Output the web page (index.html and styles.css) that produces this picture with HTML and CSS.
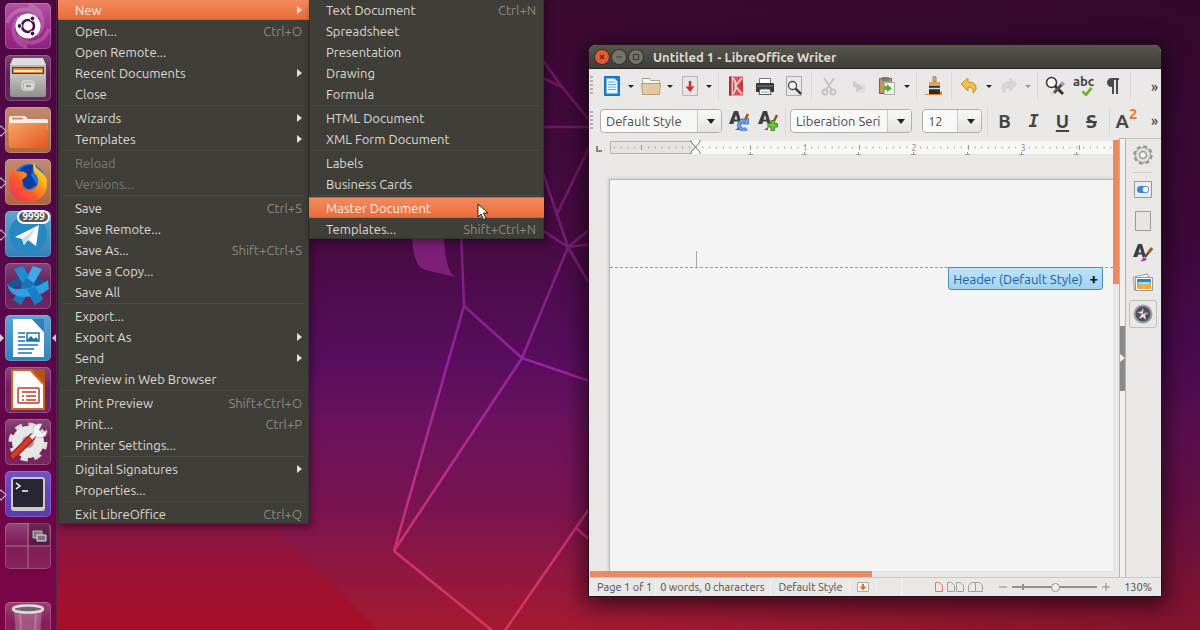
FILE: index.html
```html
<!DOCTYPE html>
<html lang="en">
<head>
    <meta charset="UTF-8">
    <meta name="viewport" content="width=device-width, initial-scale=1.0">
    <title>Untitled 1 - LibreOffice Writer</title>
    <link rel="stylesheet" href="styles.css">
</head>
<body>
    <svg class="wallpaper" viewBox="0 0 1200 630" preserveAspectRatio="xMidYMid slice" aria-hidden="true">
        <defs>
            <linearGradient id="sky" x1="0" y1="0" x2="0" y2="1">
                <stop offset="0" stop-color="#3a0932"/>
                <stop offset=".38" stop-color="#470b42"/>
                <stop offset=".57" stop-color="#580d5e"/>
                <stop offset=".66" stop-color="#69125d"/>
                <stop offset=".8" stop-color="#781451"/>
                <stop offset="1" stop-color="#a51a30"/>
            </linearGradient>
            <linearGradient id="wire" gradientUnits="userSpaceOnUse" x1="0" y1="60" x2="0" y2="630">
                <stop offset="0" stop-color="#6c1760"/>
                <stop offset=".3" stop-color="#751c70"/>
                <stop offset=".53" stop-color="#9622a0"/>
                <stop offset=".75" stop-color="#c02d88"/>
                <stop offset="1" stop-color="#dc355a"/>
            </linearGradient>
            <linearGradient id="red" x1="0" y1="0" x2="0" y2="1">
                <stop offset="0" stop-color="#a80a2a" stop-opacity="0"/>
                <stop offset="1" stop-color="#a80a25" stop-opacity=".75"/>
            </linearGradient>
            <linearGradient id="shade" x1="0" y1="0" x2="1" y2="0">
                <stop offset=".5" stop-color="#200020" stop-opacity="0"/>
                <stop offset="1" stop-color="#200020" stop-opacity=".25"/>
            </linearGradient>
        </defs>
        <path d="M0 0h1200v630H0z" fill="url(#sky)"/>
        <path d="M0 500h250l128 130H0z" fill="url(#red)"/>
        <path d="M0 0h1200v630H0z" fill="url(#shade)"/>
        <path d="M412 238Q414 268 425 270L455 277Q445 270 444 238z" fill="#7d1e78"/>
        <path d="M461 230L464 306L522 358L568 247M464 306L394 551L522 358L610 388M394 551L494 632M504 632L620 464M576 528L600 549M568 247L530 222M568 247L600 221M568 247L600 243M568 247L600 302M568 247L543 173M557 214L600 125M530 42L562 87L600 133M530 72L562 87M530 127H600" fill="none" stroke="url(#wire)" stroke-width="2.6"/>
    </svg>

    <nav class="launcher" aria-label="Launcher">
        <button class="tile dash" aria-label="Search your computer">
            <svg viewBox="0 0 46 46">
                <path d="M2 20C8 4 26 2 34 14M44 26C38 42 20 44 12 32M22 44C8 40 4 24 14 14M24 2C38 6 42 22 32 32" fill="none" stroke="#fff" stroke-opacity=".18" stroke-width="4"/>
                <circle cx="23" cy="23" r="12.5" fill="#fff"/>
                <circle cx="23" cy="23" r="6" fill="none" stroke="#50104a" stroke-width="2.6"/>
                <g fill="#50104a" stroke="#fff" stroke-width="1"><circle cx="14.5" cy="23" r="2.4"/><circle cx="27.5" cy="15.5" r="2.4"/><circle cx="27.5" cy="30.5" r="2.4"/></g>
            </svg>
        </button>
        <button class="tile" aria-label="Files">
            <svg viewBox="0 0 46 46">
                <linearGradient id="steel" x1="0" y1="0" x2="0" y2="1"><stop stop-color="#c4c4c2"/><stop offset="1" stop-color="#8f8f8d"/></linearGradient>
                <path d="M8 3h30l3 7v8H5v-8z" fill="#dededc"/>
                <path d="M5 10h36v9H5z" fill="#b9b9b7"/>
                <path d="M7 12h32v7H7z" fill="#4b3a2e"/>
                <path d="M8 13h30v5H8z" fill="#e8822f"/><path d="M9 15h28v2H9z" fill="#fbe6d0"/>
                <path d="M5 19h36v21a2 2 0 0 1-2 2H7a2 2 0 0 1-2-2z" fill="url(#steel)"/>
                <rect x="17" y="26" width="12" height="9" rx="2" fill="#b5b5b3" stroke="#e6e6e4"/>
                <rect x="20" y="29" width="7" height="4" fill="#9a9a98" stroke="#fff"/>
            </svg>
        </button>
        <button class="tile brown running" aria-label="Home folder">
            <svg viewBox="0 0 46 46">
                <linearGradient id="fold" x1="0" y1="0" x2="1" y2="1"><stop stop-color="#f5a768"/><stop offset="1" stop-color="#e4561d"/></linearGradient>
                <path d="M4 11q0-2 2-2h14l3 3h18q2 0 2 2v8H4z" fill="#f2efec"/>
                <path d="M7 11.500h11" stroke="#e98a4b" stroke-width="2"/>
                <path d="M3 16h40l-1 23q0 2-2 2H6q-2 0-2-2z" fill="url(#fold)"/>
            </svg>
        </button>
        <button class="tile brown running" aria-label="Firefox">
            <svg viewBox="0 0 46 46">
                <linearGradient id="fox" x1="0" y1="1" x2="1" y2="0"><stop stop-color="#f0266a"/><stop offset=".4" stop-color="#ff5b28"/><stop offset=".75" stop-color="#ffc21f"/><stop offset="1" stop-color="#fff044"/></linearGradient>
                <circle cx="24" cy="21" r="16" fill="#1a78e0"/>
                <path d="M14 12q7-9 17-5l-5 9 6 10-9 5-8-9z" fill="#123d9e"/>
                <path d="M29 3Q30 9 35 12Q43 18 42 26Q40 42 23 43Q5 42 4 25Q4 15 10 8L12 13Q16 11 21 14Q23 15 21 18L17 21Q19 25 17 27Q21 32 28 30Q36 26 32 17Q26 12 29 3z" fill="url(#fox)"/>
            </svg>
        </button>
        <button class="tile blue running" aria-label="Telegram, 9999 unread">
            <svg viewBox="0 0 46 46">
                <circle cx="23" cy="23" r="19" fill="#2688c4"/>
                <path d="M10 26L34 14L31 35L23 29L19 34L17 28z" fill="#fff"/>
                <path d="M17 28L31 17L23 29L19 34z" fill="#c6deed"/>
            </svg>
            <span class="badge">9999</span>
        </button>
        <button class="tile" aria-label="Ribbon">
            <svg viewBox="0 0 46 46">
                <path d="M3 20Q23 8 43 20L42 27Q23 16 4 27z" fill="#125b96"/>
                <path d="M9 6L18 3L38 36L30 42z" fill="#1f8bd3"/>
                <path d="M28 3L37 6L16 42L8 37z" fill="#1976bb"/>
                <path d="M28 3L37 6L29 20L22 15z" fill="#41a9e8"/>
                <path d="M2 19Q3 27 17 26Q33 25 43 17L44 26Q34 34 19 34Q3 33 2 19z" fill="#2f9fe4"/>
                <path d="M22 26L30 24L38 36L30 42z" fill="#1b7fc6"/>
            </svg>
        </button>
        <button class="tile blue running active" aria-label="LibreOffice Writer">
            <svg viewBox="0 0 46 46">
                <path d="M8 4h19l12 13v25H8z" fill="#fff"/><path d="M27 4h12v13z" fill="#2c82c0"/>
                <path d="M13 18h7M13 22h7M13 26h7M13 30h20M13 34h16M13 38h14" stroke="#1775b7" stroke-width="1.500"/>
                <path d="M22 18h12v8H22z" fill="none" stroke="#1775b7" stroke-width="1.500"/><path d="M21 26l5-5 3 3 2-2 3 4z" fill="#1775b7"/>
            </svg>
        </button>
        <button class="tile" aria-label="LibreOffice Impress">
            <svg viewBox="0 0 46 46">
                <path d="M6 2h21l13 14v27H6z" fill="#cf661c"/><path d="M8 4h17l13 14v23H8z" fill="#fff"/><path d="M27 2h13v14z" fill="#b5521c"/>
                <rect x="13" y="21" width="21" height="15" rx="1" fill="none" stroke="#bd3c2a" stroke-width="1.500"/>
                <path d="M17 25h14M17 29h2M21 29h10M17 33h2M21 33h10" stroke="#bd3c2a" stroke-width="1.500"/>
            </svg>
        </button>
        <button class="tile" aria-label="System Settings">
            <svg viewBox="0 0 46 46">
                <circle cx="23" cy="23" r="17" fill="none" stroke="#dcdcda" stroke-width="5" stroke-dasharray="7 6.350"/>
                <circle cx="23" cy="23" r="11" fill="none" stroke="#e6e6e4" stroke-width="10"/>
                <circle cx="23" cy="23" r="6" fill="#a88a98" stroke="#c8c8c6"/>
                <path d="M8 37L27 18" stroke="#8a1512" stroke-width="7" stroke-linecap="round"/>
                <path d="M8 37L27 18" stroke="#d83a2a" stroke-width="5" stroke-linecap="round"/>
                <path d="M26 19L33 12" stroke="#f4f4f4" stroke-width="4"/>
                <path d="M37 5a7 7 0 1 0 5 6l-5 3-3-3z" fill="#f4f4f4" stroke="#aaa" stroke-width=".5"/>
            </svg>
        </button>
        <button class="tile violet running" aria-label="Terminal">
            <svg viewBox="0 0 46 46">
                <rect x="6" y="6" width="34" height="34" rx="3" fill="#cbcbc8"/>
                <rect x="8" y="8" width="30" height="28" rx="1" fill="#272632"/>
                <path d="M11 12l4 3-4 3M17 20h6" fill="none" stroke="#fff" stroke-width="1.500"/>
            </svg>
        </button>
        <button class="tile" aria-label="Workspace Switcher">
            <svg viewBox="0 0 46 46">
                <path d="M24 0h20v23H24z" fill="#2b1523" fill-opacity=".45"/>
                <path d="M23 1v44M1 23h44" stroke="#b06f97" stroke-width="1"/>
                <path d="M28 8h9v7h-9z" fill="#8b7a85" stroke="#bbb"/><path d="M32 12h9v6h-9z" fill="#777" stroke="#e6e6e6"/>
            </svg>
        </button>
        <button class="tile trash" aria-label="Trash">
            <svg viewBox="0 0 46 46">
                <path d="M9 8h28l-3 38H12z" fill="#d6b9c8" fill-opacity=".35"/>
                <path d="M15 12l2 33M31 12l-2 33" stroke="#fff" stroke-opacity=".2" stroke-width="2"/>
                <ellipse cx="23" cy="7" rx="15" ry="3.500" fill="#74606a" stroke="#dededb" stroke-width="2.500"/>
            </svg>
        </button>
    </nav>

    <div class="menu file-menu" role="menu" aria-label="File">
        <button class="item sub selected" role="menuitem">New</button>
        <button class="item" role="menuitem">Open...<kbd>Ctrl+O</kbd></button>
        <button class="item" role="menuitem">Open Remote...</button>
        <button class="item sub" role="menuitem">Recent Documents</button>
        <button class="item" role="menuitem">Close</button>
        <hr>
        <button class="item sub" role="menuitem">Wizards</button>
        <button class="item sub" role="menuitem">Templates</button>
        <hr>
        <button class="item" role="menuitem" disabled>Reload</button>
        <button class="item" role="menuitem" disabled>Versions...</button>
        <hr>
        <button class="item" role="menuitem">Save<kbd>Ctrl+S</kbd></button>
        <button class="item" role="menuitem">Save Remote...</button>
        <button class="item" role="menuitem">Save As...<kbd>Shift+Ctrl+S</kbd></button>
        <button class="item" role="menuitem">Save a Copy...</button>
        <button class="item" role="menuitem">Save All</button>
        <hr>
        <button class="item" role="menuitem">Export...</button>
        <button class="item sub" role="menuitem">Export As</button>
        <button class="item sub" role="menuitem">Send</button>
        <button class="item" role="menuitem">Preview in Web Browser</button>
        <hr>
        <button class="item" role="menuitem">Print Preview<kbd>Shift+Ctrl+O</kbd></button>
        <button class="item" role="menuitem">Print...<kbd>Ctrl+P</kbd></button>
        <button class="item" role="menuitem">Printer Settings...</button>
        <hr>
        <button class="item sub" role="menuitem">Digital Signatures</button>
        <button class="item" role="menuitem">Properties...</button>
        <hr>
        <button class="item" role="menuitem">Exit LibreOffice<kbd>Ctrl+Q</kbd></button>
    </div>

    <div class="menu new-menu" role="menu" aria-label="New">
        <button class="item" role="menuitem">Text Document<kbd>Ctrl+N</kbd></button>
        <button class="item" role="menuitem">Spreadsheet</button>
        <button class="item" role="menuitem">Presentation</button>
        <button class="item" role="menuitem">Drawing</button>
        <button class="item" role="menuitem">Formula</button>
        <hr>
        <button class="item" role="menuitem">HTML Document</button>
        <button class="item" role="menuitem">XML Form Document</button>
        <hr>
        <button class="item" role="menuitem">Labels</button>
        <button class="item" role="menuitem">Business Cards</button>
        <hr>
        <button class="item selected" role="menuitem">Master Document</button>
        <button class="item" role="menuitem">Templates...<kbd>Shift+Ctrl+N</kbd></button>
    </div>
    <svg class="pointer" viewBox="0 0 12 18" aria-hidden="true"><path d="M1 1v13l3-3 2.500 5.500 2.500-1-2.500-5.500H11z" fill="#fff" stroke="#222"/></svg>

    <main class="window">
        <header class="titlebar">
            <button class="dot close" aria-label="Close"><svg viewBox="0 0 14 14"><path d="M5 5l4 4M9 5l-4 4"/></svg></button>
            <button class="dot" aria-label="Minimize"><svg viewBox="0 0 14 14"><path d="M4 7h6"/></svg></button>
            <button class="dot" aria-label="Maximize"><svg viewBox="0 0 14 14"><path d="M4.500 4.500h5v5h-5z"/></svg></button>
            <h1>Untitled 1 - LibreOffice Writer</h1>
        </header>

        <div class="toolbar" role="toolbar" aria-label="Standard">
            <i class="grip"></i>
            <button class="tool split" aria-label="New"><svg viewBox="0 0 20 20"><path d="M2.500.500h15v19h-15z" fill="#1d80c4" stroke="#1a72b0"/><path d="M4.500 2.500h8l3 3v12h-11z" fill="#e9f4fc"/><path d="M6 6h7M6 8.500h8M6 11h8M6 13.500h8" stroke="#6aaede"/></svg></button>
            <button class="caret" aria-label="New options"></button>
            <button class="tool split" aria-label="Open"><svg viewBox="0 0 20 20"><path d="M1.500 2.500h7l1 2h9v6h-17z" fill="#f8f6f2" stroke="#a8a29a"/><path d="M.500 7.500h19l-1 11h-17z" fill="#e4c9a0" stroke="#b79c75"/></svg></button>
            <button class="caret" aria-label="Open options"></button>
            <button class="tool split" aria-label="Save"><svg viewBox="0 0 20 20"><path d="M2.500.500h15v19h-15z" fill="#e6e5e4" stroke="#b5b4b2"/><path d="M10 5v7" stroke="#d22c2c" stroke-width="2.500"/><path d="M5.500 10.500h9L10 16z" fill="#d22c2c"/></svg></button>
            <button class="caret" aria-label="Save options"></button>
            <i class="sep"></i>
            <button class="tool" aria-label="Export as PDF"><svg viewBox="0 0 20 20"><path d="M3 .500h14v19H3z" fill="#d4575a"/><path d="M6 1v18M16 2L9 10l7 8M7 2q3 4 3 8t-3 8" fill="none" stroke="#f6dcdc" stroke-width="1.500"/><path d="M3 .500h2.500v19H3z" fill="#b22c34"/><path d="M17 4v12l-5-6z" fill="#c13c42"/></svg></button>
            <button class="tool" aria-label="Print"><svg viewBox="0 0 20 20"><path d="M4.500 2.500h11v6h-11z" fill="#fff" stroke="#777"/><path d="M1 8q0-1 1-1h16q1 0 1 1v8H1z" fill="#35383b"/><path d="M2 10h16" stroke="#84888c"/><path d="M5 13h10l1 5.500H4z" fill="#fff" stroke="#555"/><path d="M6 16h8" stroke="#6ba4ce"/></svg></button>
            <button class="tool" aria-label="Print Preview"><svg viewBox="0 0 20 20"><path d="M2.500.500h15v19h-15z" fill="#e8e7e6" stroke="#aaa"/><circle cx="8.500" cy="9.500" r="4" fill="#f6f6f6" stroke="#444" stroke-width="1.300"/><path d="M11.500 12.500l5.500 5.500" stroke="#333" stroke-width="2.400"/></svg></button>
            <i class="sep"></i>
            <button class="tool" aria-label="Cut"><svg viewBox="0 0 20 20"><g fill="none" stroke="#c3c2bf" stroke-width="1.800"><path d="M5 2l8 12M15 2L7 14"/><circle cx="6" cy="16" r="2.500"/><circle cx="14" cy="16" r="2.500"/></g></svg></button>
            <button class="tool" aria-label="Copy"><svg viewBox="0 0 20 20"><path d="M9 8h8v9H9z" fill="#dfdedb"/><path d="M7 5q-4 5 2 6M9 8l5 4-5 3z" fill="#cfcecb" stroke="#c9c8c5" stroke-width="1.500"/></svg></button>
            <button class="tool" aria-label="Paste"><svg viewBox="0 0 20 20"><path d="M2.500 2.500h12v15h-12z" fill="#c09555" stroke="#876329"/><path d="M5 1h7v4H5z" fill="#777"/><path d="M7.500 6.500h10v12h-10z" fill="#f0f0ef" stroke="#aaa"/><path d="M7 10h3V8l5 4.500-5 3.500v-2H7z" fill="#57ae2c"/></svg></button>
            <button class="caret" aria-label="Paste options"></button>
            <i class="sep"></i>
            <button class="tool" aria-label="Clone Formatting"><svg viewBox="0 0 20 20"><path d="M1 18h13l4-3v4H1z" fill="#ee8127"/><path d="M9 6V1q1.500-1.500 3 0v5z" fill="#d9b377" stroke="#a77d3b"/><path d="M5 6h11v5H5z" fill="#d7a55d"/><path d="M5 10h11v8H5z" fill="#2d2b2a"/><path d="M5 12.500h11" stroke="#ddd" stroke-width="1.500"/></svg></button>
            <i class="sep"></i>
            <button class="tool" aria-label="Undo"><svg viewBox="0 0 20 20"><path d="M2 8l7-6v4q9 0 8 7-1 3-3 4 1-6-5-6v4z" fill="#f4c04a" stroke="#c78d20"/></svg></button>
            <button class="caret" aria-label="Undo options"></button>
            <button class="tool split" aria-label="Redo" disabled><svg viewBox="0 0 20 20"><path d="M18 8l-7-6v4q-9 0-8 7 1 3 3 4-1-6 5-6v4z" fill="#d8d7d5" stroke="#d0cfcc"/></svg></button>
            <button class="caret" aria-label="Redo options" disabled></button>
            <i class="sep"></i>
            <button class="tool" aria-label="Find and Replace"><svg viewBox="0 0 20 20"><circle cx="6.500" cy="6.500" r="5" fill="#f7f7f7" stroke="#333" stroke-width="1.500"/><path d="M10 10l8 8" stroke="#333" stroke-width="3"/><path d="M18 7l-9 10" stroke="#55514c" stroke-width="3"/><path d="M18.500 6.500l-2 2.500" stroke="#cf8ac4" stroke-width="4"/><path d="M6 19l1-4 3 2.500z" fill="#f0d56b"/></svg></button>
            <button class="tool spell" aria-label="Spelling">abc<svg viewBox="0 0 12 10"><path d="M1 5l4 3.500L11 1" fill="none" stroke="#62b02e" stroke-width="2.800"/></svg></button>
            <button class="tool" aria-label="Formatting Marks"><svg viewBox="0 0 20 20"><path d="M16 2H8.500a4.500 4.500 0 0 0 0 9H9v7h2V4h2v14h2V4h1z" fill="#4a4a4a"/></svg></button>
            <i class="sep"></i>
            <button class="more" aria-label="More controls">»</button>
        </div>

        <div class="toolbar formatting" role="toolbar" aria-label="Formatting">
            <i class="grip"></i>
            <span class="combo"><select aria-label="Paragraph Style"><option>Default Style</option></select></span>
            <button class="tool" aria-label="Update Style"><svg viewBox="0 0 20 20"><path d="M5 0h4l4 13H9.500l-.6-2.500H5L4.500 13H0zM7 4L5.500 8.500H8.300z" fill="#3d4043"/><path d="M19 3l-3 6" stroke="#9a4e22" stroke-width="2.500"/><path d="M6 19l4-3v3z" fill="#b72cac"/><path d="M17.500 17.500a4.500 4.500 0 1 1-1-7.500" fill="none" stroke="#2f66ae" stroke-width="3.600"/><path d="M17.500 17.500a4.500 4.500 0 1 1-1-7.500" fill="none" stroke="#6ca5e6" stroke-width="2.200"/><path d="M13.500 13h6V7z" fill="#6ca5e6" stroke="#2f66ae" stroke-width=".7"/></svg></button>
            <button class="tool" aria-label="New Style"><svg viewBox="0 0 20 20"><path d="M5 0h4l4 13H9.500l-.6-2.500H5L4.500 13H0zM7 4L5.500 8.500H8.300z" fill="#3d4043"/><path d="M19 4l-3 6" stroke="#9a4e22" stroke-width="2.500"/><path d="M6 19l4-3v3z" fill="#b72cac"/><path d="M13 9.500h3.500v3h3V16h-3v3.500H13V16h-3v-3.500h3z" fill="#6cc23c" stroke="#3f8a1b"/></svg></button>
            <i class="sep"></i>
            <span class="combo font"><select aria-label="Font Name"><option>Liberation Serif</option></select></span>
            <span class="combo size"><select aria-label="Font Size"><option>12</option></select></span>
            <i class="sep"></i>
            <button class="tool letter" aria-label="Bold">B</button>
            <button class="tool letter italic" aria-label="Italic">I</button>
            <button class="tool letter underline" aria-label="Underline">U</button>
            <button class="tool letter strike" aria-label="Strikethrough">S</button>
            <i class="sep"></i>
            <button class="tool letter super" aria-label="Superscript">A<sup>2</sup></button>
            <button class="more" aria-label="More controls">»</button>
        </div>

        <div class="workspace">
            <div class="editor">
                <div class="ruler">
                    <button class="tab-stop" aria-label="Tab stop"></button>
                    <svg class="scale" viewBox="0 0 503 17" preserveAspectRatio="xMinYMin slice" aria-hidden="true">
                        <path d="M86 2h417v13H86z" fill="#f7f7f6"/>
                        <path d="M.500 2.500h85v12H.500z" fill="#e4e3e1" stroke="#b5b4b1"/>
                        <path d="M4 8.500h499" stroke="#aaa" stroke-width="2" stroke-dasharray="1 5.800"/>
                        <path d="M31.500 6v5M140.500 6v5M249.500 6v5M358.500 6v5M469.500 6v5" stroke="#999"/>
                        <path d="M138 15.500h5M192 15.500h5M246 15.500h5M301 15.500h5M355 15.500h5M409 15.500h5M464 15.500h5M140.500 13v2M194.500 13v2M248.500 13v2M303.500 13v2M357.500 13v2M411.500 13v2M466.500 13v2" stroke="#9a9996"/>
                        <path d="M191 4h9v9h-9zM300 4h9v9h-9zM409 4h9v9h-9z" fill="#f7f7f6"/>
                        <g class="inch"><text x="195" y="12">1</text><text x="304" y="12">2</text><text x="413" y="12">3</text></g>
                        <path d="M81 1v2l4.500 5L90 3V1M81 15v-2l4.500-5 4.500 5v2" fill="#f7f7f6" stroke="#777"/>
                    </svg>
                </div>
                <div class="canvas">
                    <div class="page">
                        <div class="page-head"><i class="text-cursor"></i></div>
                        <button class="header-tag">Header (Default Style)<b>+</b></button>
                    </div>
                </div>
                <div class="hscroll"><i></i></div>
            </div>
            <div class="vscroll"><i></i></div>
            <button class="splitter" aria-label="Hide sidebar"><i></i></button>
            <aside class="sidebar">
                <button class="panel" aria-label="Sidebar Settings"><svg viewBox="0 0 20 20"><circle cx="10" cy="10" r="8.500" fill="none" stroke="#999" stroke-width="2.500" stroke-dasharray="4 2.670"/><circle cx="10" cy="10" r="7.500" fill="#e2e1df" stroke="#999"/><circle cx="10" cy="10" r="3.500" fill="#f2f1f0" stroke="#999" stroke-width="1.500"/></svg></button>
                <hr>
                <button class="panel" aria-label="Properties"><svg viewBox="0 0 20 20"><path d="M1.500 1.500h17v16h-17z" fill="#ecebe9" stroke="#999"/><rect x="4" y="6" width="12" height="7" rx="3.500" fill="#3584d6"/><circle cx="12.500" cy="9.500" r="2.800" fill="#fff"/></svg></button>
                <button class="panel" aria-label="Page"><svg viewBox="0 0 20 20"><path d="M2.500.500h15v19h-15z" fill="#e6e5e3" stroke="#999"/></svg></button>
                <button class="panel" aria-label="Styles"><svg viewBox="0 0 20 20"><path d="M5 2h4l4 13H9.500l-.6-2.500H5L4.500 15H0zM7 6l-1.500 4.500H8.300z" fill="#3d4043"/><path d="M19 6l-3 4" stroke="#a85a24" stroke-width="3"/><path d="M16 10l-4 5" stroke="#55504c" stroke-width="2.500"/><path d="M7 19q3-1 3-4l4 2q-2 3-7 2z" fill="#b72cac"/></svg></button>
                <button class="panel" aria-label="Gallery"><svg viewBox="0 0 20 20"><path d="M.500 4l14-3 1 3v12l-14 1z" fill="#f4f4f2" stroke="#999"/><path d="M2.500 4.500h17v13h-17z" fill="#fff" stroke="#999"/><path d="M4 6h14v5H4z" fill="#2586cf"/><path d="M4 11h14v5H4z" fill="#efa945"/><path d="M4 10q7 3 14 0v-1H4z" fill="#a8dcf0"/></svg></button>
                <button class="panel current" aria-label="Navigator"><svg viewBox="0 0 20 20"><circle cx="10" cy="10" r="8.500" fill="#475062" stroke="#9c9c9a" stroke-width="2"/><path d="M10 4l1.500 4.500L16 9l-4 2 1 5-3-3-4 2 2-4-4-3 4.500-.5z" fill="#e3e3e3"/><path d="M10 4l1.500 4.500L16 9l-6 1zM4 8l6 2-2 1z" fill="#cf3040"/></svg></button>
            </aside>
        </div>

        <footer class="statusbar">
            <span class="cell pages">Page 1 of 1</span>
            <span class="cell words">0 words, 0 characters</span>
            <span class="cell">Default Style</span>
            <span class="cell"><svg viewBox="0 0 12 11"><path d="M.500.500h11v9H.500z" fill="#f6f5f4" stroke="#aaa"/><path d="M6 2v3" stroke="#e2711d" stroke-width="2"/><path d="M2.500 4.500h7L6 8.500z" fill="#e2711d"/></svg></span>
            <span class="cell blank"></span>
            <button class="view single" aria-label="Single-page view"><svg viewBox="0 0 8 10"><path d="M.500.500h4l3 3v6h-7z"/></svg></button>
            <button class="view" aria-label="Multiple-page view"><svg viewBox="0 0 17 10"><path d="M.500.500h4l3 3v6h-7zM9.500.500h4l3 3v6h-7z"/></svg></button>
            <button class="view" aria-label="Book view"><svg viewBox="0 0 15 10"><path d="M7.500.500v9h-7v-6l3-3zM7.500.500h4l3 3v6h-7z"/></svg></button>
            <div class="zoom">
                <button aria-label="Zoom out"><svg viewBox="0 0 8 8"><path d="M0 4h8"/></svg></button>
                <input type="range" min="0" max="100" value="51" aria-label="Zoom">
                <button aria-label="Zoom in"><svg viewBox="0 0 8 8"><path d="M0 4h8M4 0v8"/></svg></button>
            </div>
            <output class="percent">130%</output>
        </footer>
    </main>
</body>
</html>
```
FILE: styles.css
```css
* {
    box-sizing: border-box;
}

body {
    margin: 0;
    height: 100vh;
    position: relative;
    overflow: hidden;
    background: #380931;
    font-family: Ubuntu, "Noto Sans", sans-serif;
    font-size: 13px;
    color: #4c4c4c;
}

button {
    margin: 0;
    padding: 0;
    border: none;
    background: none;
    font: inherit;
    color: inherit;
}

svg {
    display: block;
}

.wallpaper {
    position: absolute;
    inset: 0;
    width: 100%;
    height: 100%;
}

/* launcher */
.launcher {
    position: relative;
    width: 57px;
    height: 100vh;
    padding: 3px 6px 0 5px;
    display: flex;
    flex-direction: column;
    gap: 6px;
    overflow: hidden;
    background: linear-gradient(#4d0843, #5b084d 55%, #7d0446);
    border-right: 1px solid #5c2653;
}

.tile {
    position: relative;
    flex: none;
    width: 46px;
    height: 46px;
    border-radius: 5px;
    background: linear-gradient(#ffffff40, #ffffff18 45%, #ffffff20);
    box-shadow: inset 0 0 0 1px #ffffff30;
}

.tile.dash {
    background: linear-gradient(#b0559f, #a02a8c 60%, #8f2380);
}

.tile.brown {
    background: linear-gradient(#c28a70, #ae6543);
}

.tile.blue {
    background: linear-gradient(#5da5cf, #3580b8);
}

.tile.violet {
    background: linear-gradient(#6e52c4, #5b38ae);
}

.tile.trash {
    margin-top: 27px;
}

.running::before,
.active::after {
    content: "";
    position: absolute;
    left: -5px;
    top: 19px;
    border: 4px solid transparent;
    border-left-color: #d6cdd3;
    border-right-width: 0;
}

.running:not(.active)::before {
    left: -8px;
    top: 20px;
    width: 6px;
    height: 6px;
    border: 1px solid #cbbdc7;
    transform: rotate(45deg);
}

.active::after {
    left: auto;
    right: -5px;
    border-left-width: 0;
    border-right: 4px solid #d6cdd3;
}

.badge {
    position: absolute;
    top: -1px;
    right: 1px;
    padding: 0 3px;
    border: 2px solid #fff;
    border-radius: 8px;
    background: #5a5a5a;
    color: #fff;
    font-size: 10px;
    font-weight: bold;
    line-height: 10px;
}

/* menus */
.menu {
    position: absolute;
    top: -1px;
    background: #3f3e39;
    box-shadow: inset 0 0 0 1px #353430, 2px 3px 8px #00000066;
    color: #dfdbd2;
}

.file-menu {
    left: 58px;
    width: 251px;
}

.new-menu {
    left: 309px;
    width: 235px;
}

.menu hr {
    height: 1px;
    margin: 1px 4px;
    border: none;
    background: #4a4944;
}

.item {
    display: flex;
    align-items: center;
    width: 100%;
    height: 21px;
    padding: 1px 8px 0 17px;
    border: 1px solid transparent;
    border-width: 1px 0;
    line-height: 18px;
}

.file-menu .item {
    padding-right: 7px;
}

.item kbd {
    margin-left: auto;
    font: inherit;
    color: #8c8981;
}

.item:disabled {
    color: #7d7b75;
}

.item:hover,
.item.selected {
    background: linear-gradient(#f58a5e, #e96d3b);
    border-color: #d9602f;
    color: #fdf0e8;
}

.item.sub::after {
    content: "";
    margin-left: auto;
    border: 4px solid transparent;
    border-left: 5px solid #e4e0d8;
    border-right: none;
}

.pointer {
    position: absolute;
    left: 477px;
    top: 203px;
    width: 12px;
    height: 18px;
}

/* window */
.window {
    position: absolute;
    left: 589px;
    right: 39px;
    top: 45px;
    bottom: 34px;
    display: flex;
    flex-direction: column;
    overflow: hidden;
    border-radius: 7px 7px 0 0;
    background: #e9e8e6;
    box-shadow: 0 0 0 1px #26111f, 0 5px 22px 4px #00000099;
}

.titlebar {
    flex: none;
    height: 24px;
    padding-left: 6px;
    display: flex;
    align-items: center;
    gap: 3px;
    background: linear-gradient(#59564e, #3e3d38);
    border-bottom: 1px solid #24231f;
}

.titlebar h1 {
    margin: 0 0 0 7px;
    font-size: 13px;
    font-weight: bold;
    color: #dfdbd2;
}

.dot {
    width: 14px;
    height: 14px;
    border-radius: 50%;
    background: #75736b;
    box-shadow: 0 0 0 1px #34332f;
}

.dot path {
    fill: none;
    stroke: #3b3a36;
    stroke-width: 1.2;
}

.dot.close {
    background: #e8592c;
}

.toolbar {
    flex: none;
    height: 34px;
    display: flex;
    align-items: center;
}

.grip {
    flex: none;
    width: 3px;
    height: 20px;
    margin: 0 5px 0 1px;
    background: repeating-linear-gradient(#b4b3b0 0 2px, transparent 2px 4px);
}

.tool {
    flex: none;
    width: 29px;
    height: 28px;
    display: flex;
    align-items: center;
    justify-content: center;
}

.tool.split {
    width: 27px;
}

.tool svg {
    width: 20px;
    height: 20px;
}

.caret {
    flex: none;
    width: 12px;
    height: 28px;
    display: flex;
    align-items: center;
    justify-content: center;
}

.caret::before {
    content: "";
    border: 3px solid transparent;
    border-top: 3px solid #222;
    border-bottom: none;
}

.caret:disabled {
    opacity: 0.4;
}

.sep {
    flex: none;
    width: 1px;
    height: 28px;
    margin: 0 2px 0 3px;
    background: #dad9d6;
}

.tool.spell {
    flex-direction: column;
    font-size: 13px;
    font-weight: bold;
    line-height: 11px;
    color: #444;
}

.tool.spell svg {
    width: 12px;
    height: 9px;
    margin-left: 6px;
}

.more {
    margin-left: auto;
    padding-right: 3px;
    font-size: 15px;
    color: #222;
}

.formatting {
    height: 35px;
}

.formatting .grip {
    margin-right: 7px;
}

.combo {
    position: relative;
    flex: none;
    width: 122px;
    height: 24px;
    margin-right: 2px;
}

.combo.font {
    margin: 0 10px 0 2px;
}

.combo.size {
    width: 60px;
}

.combo select {
    appearance: none;
    width: 100%;
    height: 100%;
    padding: 0 25px 0 5px;
    border: 1px solid #b0afac;
    border-radius: 4px;
    background: linear-gradient(90deg, #fbfbfb, #f4f4f3);
    color: #4c4c4c;
    font: inherit;
}

.combo.font select {
    padding-right: 30px;
}

.combo::before {
    content: "";
    position: absolute;
    top: 1px;
    right: 1px;
    bottom: 1px;
    width: 23px;
    border-left: 1px solid #c9c8c5;
    border-radius: 0 3px 3px 0;
    background: linear-gradient(#f8f8f7, #e4e3e1);
    pointer-events: none;
}

.combo::after {
    content: "";
    position: absolute;
    top: 10px;
    right: 7px;
    border: 4px solid transparent;
    border-top: 5px solid #222;
    border-bottom: none;
    pointer-events: none;
}

.letter {
    font-size: 19px;
    font-weight: bold;
    line-height: 20px;
    color: #444;
}

.letter.italic {
    font-family: "DejaVu Sans Mono", monospace;
    font-size: 17px;
    font-style: italic;
}

.letter.underline {
    text-decoration: underline 2px;
    text-underline-offset: 2px;
}

.letter.strike {
    text-decoration: line-through 2px;
}

.letter.super sup {
    align-self: flex-start;
    font-size: 15px;
    line-height: 14px;
    color: #e8791d;
}

/* document area */
.workspace {
    flex: 1;
    min-height: 0;
    display: flex;
}

.editor {
    flex: 1;
    min-width: 0;
    display: flex;
    flex-direction: column;
}

.ruler {
    flex: none;
    height: 18px;
    display: flex;
    align-items: center;
}

.tab-stop {
    flex: none;
    width: 6px;
    height: 6px;
    margin: 4px 8px 0 7px;
    border: solid #888;
    border-width: 0 0 2px 2px;
}

.scale {
    flex: 1;
    min-width: 0;
    height: 17px;
}

.inch text {
    font-size: 9px;
    text-anchor: middle;
    fill: #888;
}

.canvas {
    flex: 1;
    min-height: 0;
    padding: 23px 0 0 20px;
    display: flex;
}

.page {
    position: relative;
    flex: 1;
    border: solid #b9b8b5;
    border-width: 1px 0 0 1px;
    background: #f4f4f4;
    box-shadow: -1px -1px 3px #0000001f;
}

.page-head {
    height: 88px;
    padding-left: 86px;
    display: flex;
    align-items: flex-end;
    border-bottom: 1px dashed #8f9a9f;
}

.text-cursor {
    width: 1px;
    height: 16px;
    background: #aaa;
}

.header-tag {
    position: absolute;
    top: 87px;
    right: 10px;
    height: 23px;
    padding: 0 4px;
    display: flex;
    align-items: center;
    gap: 7px;
    border: 1px solid #4a8fb8;
    border-radius: 0 0 3px 3px;
    background: linear-gradient(#c0e3f7, #9fd2f0);
    color: #14639b;
}

.header-tag b {
    font-size: 15px;
    color: #111;
}

.hscroll {
    flex: none;
    height: 6px;
    padding-left: 1px;
    display: flex;
}

.hscroll i {
    width: 54%;
    background: #ea8a63;
}

.vscroll {
    flex: none;
    width: 6px;
    padding-top: 2px;
}

.vscroll i {
    display: block;
    height: 33%;
    background: #ea8a63;
}

.splitter {
    flex: none;
    width: 7px;
    display: flex;
    flex-direction: column;
    justify-content: center;
    border: solid #b5b4b1;
    border-width: 1px 1px 0 1px;
    background: #f1f0ef;
}

.splitter i {
    height: 65px;
    width: 5px;
    display: flex;
    align-items: center;
    background: #8b8b85;
}

.splitter i::after {
    content: "";
    border: 4px solid transparent;
    border-left: 5px solid #f1f0ef;
    border-right: none;
}

.sidebar {
    flex: none;
    width: 35px;
    padding: 2px 2px 0 0;
    display: flex;
    flex-direction: column;
    align-items: center;
    gap: 3px;
    border-top: 1px solid #c4c3c0;
}

.sidebar hr {
    width: 19px;
    height: 1px;
    margin: 0;
    border: none;
    background: #d2d1ce;
}

.panel {
    width: 28px;
    height: 28px;
    display: flex;
    align-items: center;
    justify-content: center;
    border-radius: 3px;
}

.panel.current {
    border: 1px solid #c0bfbc;
}

.panel svg {
    width: 20px;
    height: 20px;
}

/* status bar */
.statusbar {
    flex: none;
    height: 19px;
    padding-right: 9px;
    display: flex;
    align-items: center;
    border-top: 1px solid #c9c8c5;
    font-size: 11px;
    line-height: 16px;
}

.cell {
    padding: 0 7px;
    border-right: 1px solid #f4f3f2;
    white-space: nowrap;
}

.cell.pages {
    padding: 0 3px 0 8px;
}

.cell.words {
    padding: 0 6px 0 4px;
}

.cell svg {
    width: 12px;
    height: 11px;
}

.cell.blank {
    align-self: stretch;
    width: 25px;
}

.view {
    margin-right: 4px;
}

.view.single {
    margin-left: auto;
}

.view svg {
    height: 10px;
}

.view path {
    fill: none;
    stroke: #a09f9c;
}

.view.single path {
    stroke: #e2775a;
}

.zoom {
    margin: 0 14px 0 12px;
    display: flex;
    align-items: center;
    gap: 5px;
}

.zoom svg {
    width: 8px;
    height: 8px;
}

.zoom path {
    stroke: #8a8986;
}

.zoom input {
    appearance: none;
    width: 85px;
    height: 10px;
    margin: 0;
    background: linear-gradient(#92918e, #92918e) 10px 50% / 2px 6px no-repeat, linear-gradient(#92918e, #92918e) 50% 50% / 100% 2px no-repeat;
}

.zoom input::-webkit-slider-thumb {
    appearance: none;
    width: 9px;
    height: 9px;
    border: 1px solid #92918e;
    border-radius: 50%;
    background: #efeeec;
}
```
